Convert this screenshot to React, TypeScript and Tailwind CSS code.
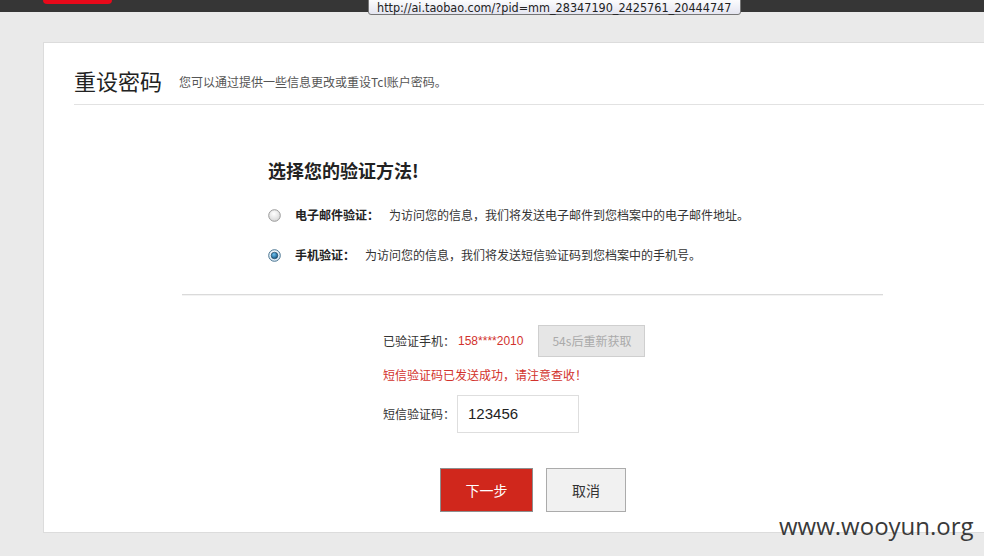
import React from "react";

const cjk = '"Microsoft YaHei","Noto Sans CJK SC","Noto Sans",sans-serif';

function Radio({ checked }: { checked?: boolean }) {
  return (
    <svg width="13" height="13" viewBox="0 0 13 13" className="shrink-0">
      <defs>
        <radialGradient id={checked ? "rc" : "ru"} cx="45%" cy="35%" r="70%">
          <stop offset="0%" stopColor="#ffffff" />
          <stop offset="100%" stopColor={checked ? "#cfe3f2" : "#d4d4d4"} />
        </radialGradient>
        <radialGradient id="dot" cx="40%" cy="35%" r="70%">
          <stop offset="0%" stopColor="#6ec2f0" />
          <stop offset="100%" stopColor="#0b4d7c" />
        </radialGradient>
      </defs>
      <circle cx="6.5" cy="6.5" r="5.8" fill={`url(#${checked ? "rc" : "ru"})`} stroke={checked ? "#4c7691" : "#9a9a9a"} strokeWidth="1" />
      {checked && <circle cx="6.5" cy="6.5" r="3.3" fill="url(#dot)" stroke="#1b3e58" strokeWidth="0.6" />}
    </svg>
  );
}

export default function App() {
  return (
    <div className="relative w-[984px] h-[556px] overflow-hidden bg-[#eaeaea]" style={{ fontFamily: cjk }}>
      {/* top bar */}
      <div className="h-[12px] bg-[#363636] flex items-start">
        <div className="ml-[43px] w-[69px] h-[4px] bg-[#e8091a] rounded-b-[5px]" />
      </div>

      {/* tooltip */}
      <div
        className="absolute left-[368px] top-[-3px] w-[373px] h-[18px] bg-gradient-to-b from-[#ffffff] to-[#e4e5f0] border border-[#767676] rounded-[3px] text-[12.5px] leading-[16px] text-[#222] pl-[8px] pt-[2px] whitespace-nowrap"
        style={{ fontFamily: '"DejaVu Sans Condensed","DejaVu Sans",sans-serif' }}
      >
        http://ai.taobao.com/?pid=mm_28347190_2425761_20444747
      </div>

      {/* card */}
      <div className="mt-[30px] ml-[43px] h-[491px] bg-white border-l border-t border-b border-[#dcdcdc]">
        <div className="pl-[30px]">
          <div className="flex items-end h-[62px] pb-[10px] border-b border-[#e2e2e2]">
            <span className="text-[22px] leading-[28px] text-[#222]">重设密码</span>
            <span className="ml-[17px] text-[12px] leading-[20px] text-[#555] pb-[2px]">您可以通过提供一些信息更改或重设Tcl账户密码。</span>
          </div>
        </div>

        <div className="ml-[138px] w-[701px]">
          <div className="pl-[86px] pt-[53px]">
            <div className="text-[18px] leading-[24px] font-bold text-[#222]">选择您的验证方法!</div>
            <div className="mt-[23px] flex items-center h-[20px] text-[12px] text-[#333]">
              <Radio />
              <span className="ml-[14px] font-bold text-[#222]">电子邮件验证：</span>
              <span className="ml-[10px]">为访问您的信息，我们将发送电子邮件到您档案中的电子邮件地址。</span>
            </div>
            <div className="mt-[20px] flex items-center h-[20px] text-[12px] text-[#333]">
              <Radio checked />
              <span className="ml-[14px] font-bold text-[#222]">手机验证：</span>
              <span className="ml-[10px]">为访问您的信息，我们将发送短信验证码到您档案中的手机号。</span>
            </div>
          </div>

          <div className="mt-[29px] border-b border-[#dadada] shadow-[0_1px_0_#f3f3f3]" />

          <div className="pl-[201px]">
            <div className="mt-[30px] flex items-center h-[32px] text-[12px]">
              <span className="text-[#333]">已验证手机：</span>
              <span className="ml-[3px] text-[#d2322d]" style={{ fontFamily: '"Liberation Sans",Arial,sans-serif' }}>158****2010</span>
              <div className="ml-[15px] w-[107px] h-[32px] bg-[#e6e6e6] border border-[#cfcfcf] text-[#aaa] flex items-center justify-center">54s后重新获取</div>
            </div>
            <div className="mt-[8px] h-[20px] leading-[20px] text-[12px] text-[#d2322d]">短信验证码已发送成功，请注意查收！</div>
            <div className="mt-[10px] flex items-center h-[38px] text-[12px]">
              <span className="text-[#333]">短信验证码：</span>
              <div className="ml-[2px] w-[122px] h-[38px] border border-[#dedede] flex items-center pl-[10px] text-[15px] text-[#222]" style={{ fontFamily: '"Liberation Sans",Arial,sans-serif' }}>123456</div>
            </div>
          </div>

          <div className="mt-[35px] ml-[258px] flex gap-[13px]">
            <div className="w-[93px] h-[44px] bg-[#d0271c] border border-[#8e8e8e] text-white text-[14px] flex items-center justify-center">下一步</div>
            <div className="w-[80px] h-[44px] bg-[#f1f1f1] border border-[#ababab] text-[#333] text-[14px] flex items-center justify-center">取消</div>
          </div>
        </div>
      </div>

      {/* watermark */}
      <div
        className="absolute left-[779px] top-[510px] text-[24px] leading-[32px] text-[#3a3a3a]"
        style={{ fontFamily: '"Open Sans",sans-serif' }}
      >
        www.wooyun.org
      </div>
    </div>
  );
}
